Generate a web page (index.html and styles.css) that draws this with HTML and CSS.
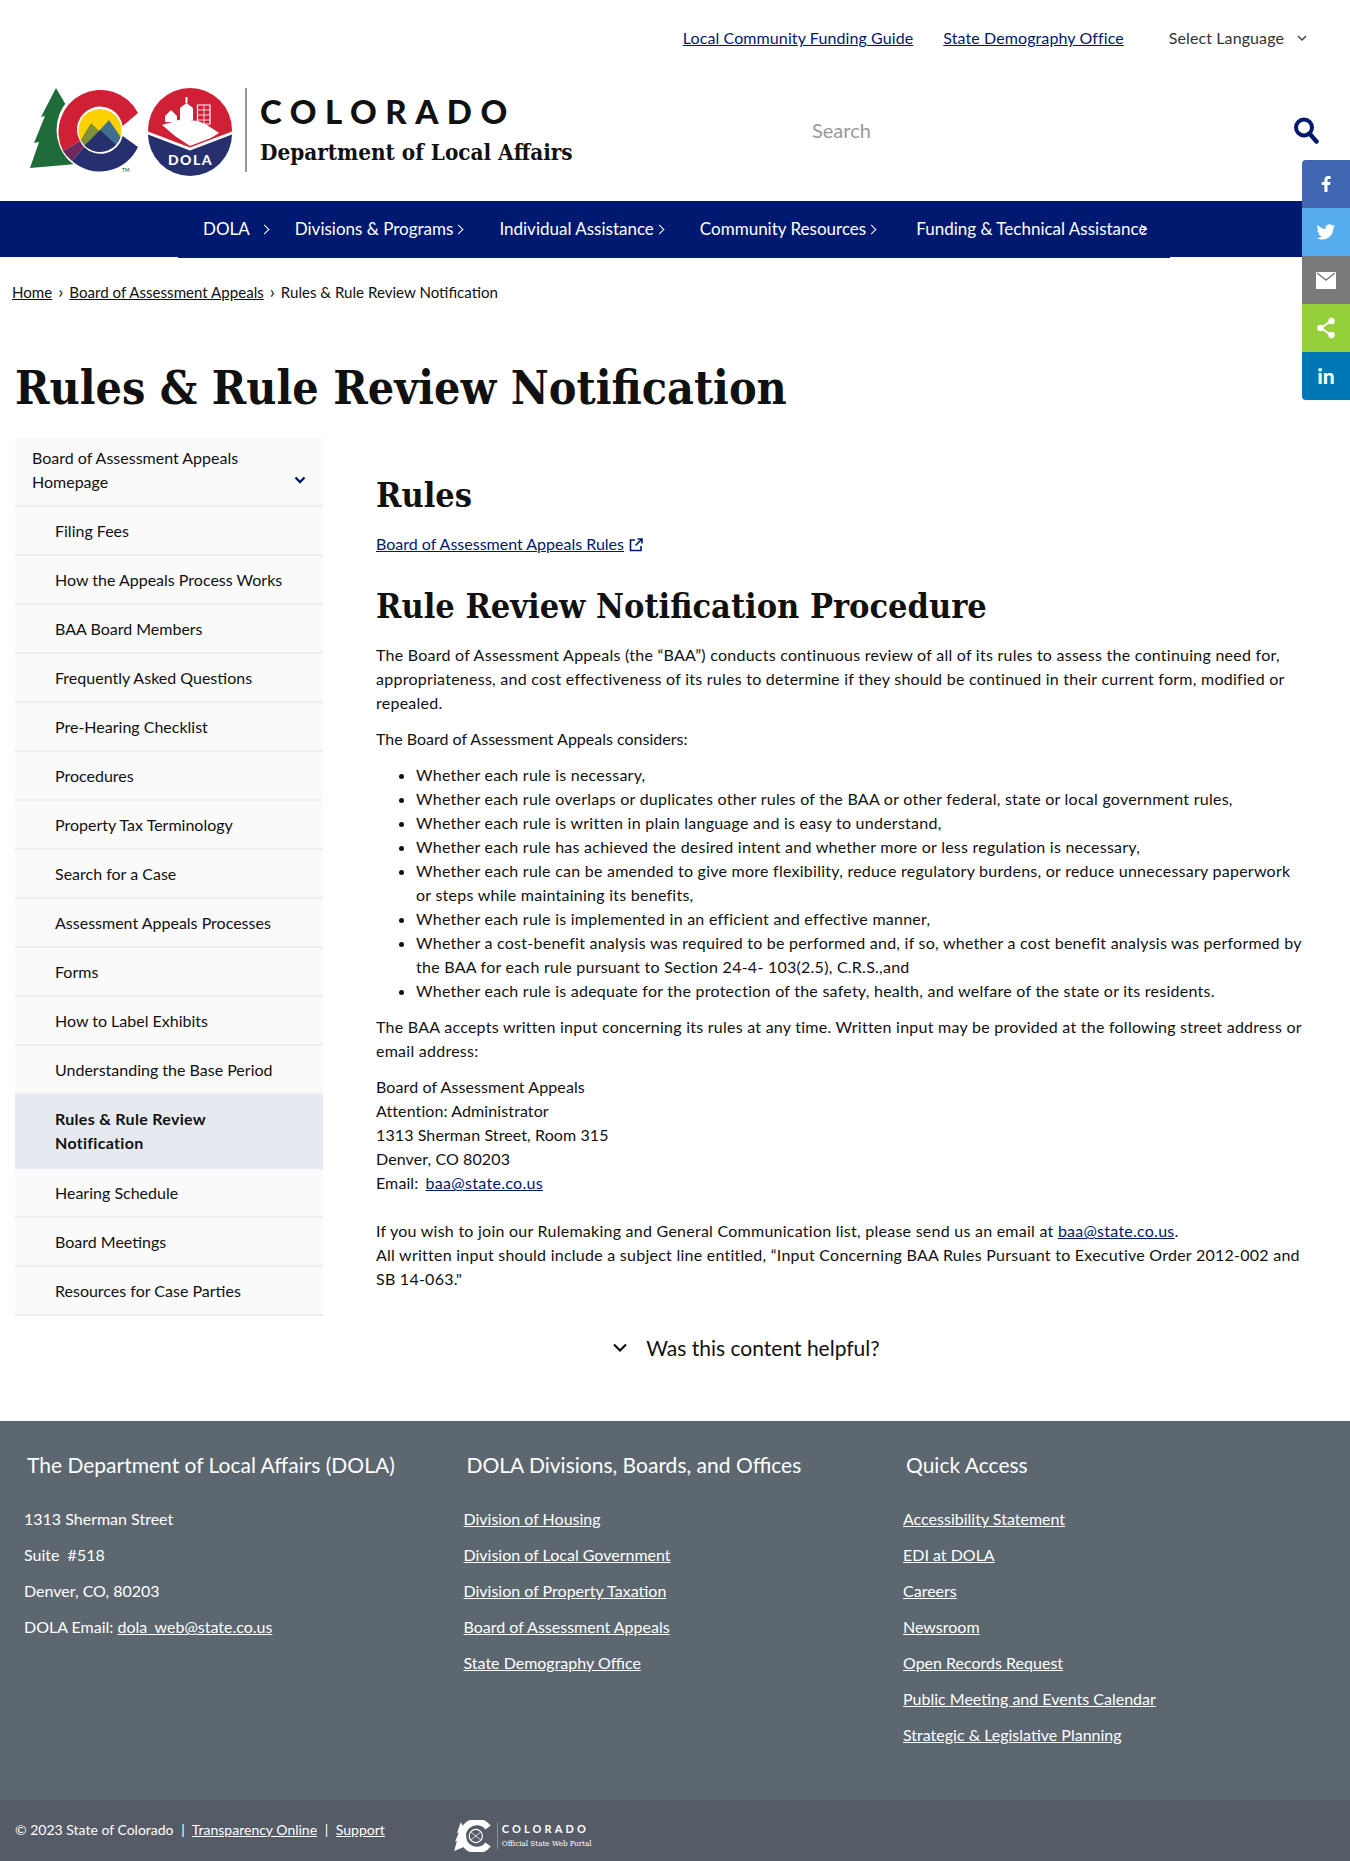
FILE: index.html
```html
<!DOCTYPE html>
<html lang="en">
<head>
  <meta charset="UTF-8">
  <meta name="viewport" content="width=device-width, initial-scale=1.0">
  <title>Rules &amp; Rule Review Notification</title>
  <link rel="stylesheet" href="styles.css">
</head>
<body>
  <div class="top-links">
    <a href="#">Local Community Funding Guide</a>
    <a href="#">State Demography Office</a>
    <span class="lang">Select Language
      <svg width="10" height="7" viewBox="0 0 10 7"><path d="M1 1l4 4 4-4" fill="none" stroke="#444" stroke-width="1.5"/></svg>
    </span>
  </div>

  <header class="masthead">
    <svg class="logo" width="230" height="92" viewBox="22 84 230 92">
      <defs>
        <clipPath id="peak"><circle cx="100" cy="130.500" r="21.500"/></clipPath>
      </defs>
      <!-- tree -->
      <path d="M56 88L70 112 76 164 30 168 39 142 34 143 45 116 41 117z" fill="#1f6b3a"/>
      <circle cx="100" cy="130" r="43.500" fill="#fff"/>
      <!-- C -->
      <path d="M138 113A42 42 0 1 0 63 151L80 141A23 23 0 1 1 122.700 126z" fill="#cf2035"/>
      <path d="M63 151L80 141A23 23 0 0 0 84 147L72 161A42 42 0 0 1 63 151z" fill="#6e2a5f"/>
      <path d="M138 147A42 42 0 0 1 72 161L84 147A23 23 0 0 0 122.700 136z" fill="#26306e"/>
      <g clip-path="url(#peak)">
        <path d="M78 108h44v45H78z" fill="#ffd100"/>
        <path d="M76 148L91 123 99 131 107 140 96 156z" fill="#7f8f3a"/>
        <path d="M99 131L109 120 124 142 112 147z" fill="#40708f"/>
        <path d="M78 152L100 130 124 152 100 158z" fill="#26306e"/>
      </g>
      <text x="122" y="172" class="tm">TM</text>
      <!-- DOLA seal -->
      <circle cx="190" cy="130" r="42" fill="#cf2035"/>
      <path d="M148 134L190 150l42-16A42 42 0 0 1 148 134z" fill="#26306e"/>
      <path d="M148 131.500L190 147.500l42-16v3L190 150.500 148 134.500z" fill="#fff"/>
      <path d="M162 125L182 119 198 121 207 125 219 133 211 138 190 146 175 136z" fill="#fff"/>
      <path d="M165 116L171 110 177 116V122H165zM180 108L186.500 103 193 108V120H180zM185.500 103V97H187.500V103z" fill="#fff"/>
      <path d="M197.500 105H210V124H197.500z" fill="none" stroke="#fff" stroke-width="1.200"/>
      <path d="M197.500 110H210M197.500 115H210M197.500 120H210M204 105V124" stroke="#fff" stroke-width=".8"/>
      <text x="190.500" y="165" text-anchor="middle" class="seal-text">DOLA</text>
      <path d="M246 88v84" stroke="#333" stroke-width="1"/>
    </svg>
    <div class="brand">
      <div class="brand-state">COLORADO</div>
      <div class="brand-dept">Department of Local Affairs</div>
    </div>
    <div class="search">
      <span class="search-hint">Search</span>
      <svg width="28" height="28" viewBox="0 0 28 28"><circle cx="12" cy="11.500" r="8" fill="none" stroke="#001970" stroke-width="4"/><path d="M17.500 17.500l7 8" stroke="#001970" stroke-width="4.400" stroke-linecap="round"/></svg>
    </div>
  </header>

  <nav class="mainnav">
    <a class="first" href="#">DOLA<i></i></a>
    <a href="#">Divisions &amp; Programs<i></i></a>
    <a href="#">Individual Assistance<i></i></a>
    <a href="#">Community Resources<i></i></a>
    <a class="last" href="#">Funding &amp; Technical Assistance<i></i></a>
  </nav>

  <div class="share">
    <a class="fb" href="#"><svg width="20" height="20" viewBox="0 0 20 20"><path d="M11.500 18v-7h2.600l.4-3h-3V6.300c0-.9.300-1.400 1.500-1.400h1.600V2.200C14.300 2.100 13.400 2 12.300 2 10 2 8.400 3.400 8.400 6v2H5.800v3h2.600v7z" fill="#fff"/></svg></a>
    <a class="tw" href="#"><svg width="20" height="20" viewBox="0 0 24 24"><path d="M23 5c-.8.400-1.700.6-2.600.7.900-.6 1.700-1.400 2-2.500-.9.500-1.900.9-2.900 1.100A4.600 4.600 0 0 0 11.600 8.500C7.800 8.300 4.400 6.500 2.100 3.700c-1.200 2.100-.6 4.800 1.400 6.100-.7 0-1.400-.2-2.100-.6 0 2.200 1.600 4.200 3.700 4.600-.7.200-1.400.2-2.100.1.600 1.900 2.300 3.200 4.300 3.200A9.300 9.300 0 0 1 .5 19c2.100 1.300 4.500 2.100 7.100 2.100 8.600 0 13.500-7.300 13.200-13.800.9-.6 1.700-1.400 2.200-2.300z" fill="#fff"/></svg></a>
    <a class="em" href="#"><svg width="20" height="20" viewBox="0 0 20 20"><path d="M0 2h20v17H0z" fill="#fff"/><path d="M1 3l9 7 9-7" fill="none" stroke="#7a7a7a" stroke-width="1.500"/></svg></a>
    <a class="sh" href="#"><svg width="20" height="22" viewBox="0 0 20 22"><path d="M15 4L5 11l10 7" fill="none" stroke="#fff" stroke-width="2"/><circle cx="15.500" cy="4" r="3.200" fill="#fff"/><circle cx="4.500" cy="11" r="3.200" fill="#fff"/><circle cx="15.500" cy="18" r="3.200" fill="#fff"/></svg></a>
    <a class="in" href="#"><span>in</span></a>
  </div>

  <div class="crumbs">
    <a href="#">Home</a><span class="sep">›</span><a href="#">Board of Assessment Appeals</a><span class="sep">›</span>Rules &amp; Rule Review Notification
  </div>

  <h1>Rules &amp; Rule Review Notification</h1>

  <div class="page">
    <aside class="sidebar">
      <a class="side-top" href="#">Board of Assessment Appeals Homepage
        <svg width="12" height="8" viewBox="0 0 12 8"><path d="M1.500 1.500L6 6l4.500-4.500" fill="none" stroke="#001970" stroke-width="2.400"/></svg>
      </a>
      <a href="#">Filing Fees</a>
      <a href="#">How the Appeals Process Works</a>
      <a href="#">BAA Board Members</a>
      <a href="#">Frequently Asked Questions</a>
      <a href="#">Pre-Hearing Checklist</a>
      <a href="#">Procedures</a>
      <a href="#">Property Tax Terminology</a>
      <a href="#">Search for a Case</a>
      <a href="#">Assessment Appeals Processes</a>
      <a href="#">Forms</a>
      <a href="#">How to Label Exhibits</a>
      <a href="#">Understanding the Base Period</a>
      <a class="active" href="#">Rules &amp; Rule Review Notification</a>
      <a href="#">Hearing Schedule</a>
      <a href="#">Board Meetings</a>
      <a href="#">Resources for Case Parties</a>
    </aside>

    <main class="content">
      <h2 class="first-head">Rules</h2>
      <p class="rules-link"><a href="#">Board of Assessment Appeals Rules</a>
        <svg width="16" height="16" viewBox="0 0 16 16"><path d="M7 3H2.500v10.500H13V9M9.500 2H14v4.500M14 2L7.500 8.500" fill="none" stroke="#001970" stroke-width="1.600"/></svg>
      </p>
      <h2>Rule Review Notification Procedure</h2>
      <p class="wide">The Board of Assessment Appeals (the “BAA”) conducts continuous review of all of its rules to assess the continuing need for, appropriateness, and cost effectiveness of its rules to determine if they should be continued in their current form, modified or repealed.</p>
      <p>The Board of Assessment Appeals considers:</p>
      <ul class="wide">
        <li>Whether each rule is necessary,</li>
        <li>Whether each rule overlaps or duplicates other rules of the BAA or other federal, state or local government rules,</li>
        <li>Whether each rule is written in plain language and is easy to understand,</li>
        <li>Whether each rule has achieved the desired intent and whether more or less regulation is necessary,</li>
        <li>Whether each rule can be amended to give more flexibility, reduce regulatory burdens, or reduce unnecessary paperwork or steps while maintaining its benefits,</li>
        <li>Whether each rule is implemented in an efficient and effective manner,</li>
        <li>Whether a cost-benefit analysis was required to be performed and, if so, whether a cost benefit analysis was performed by the BAA for each rule pursuant to Section 24-4- 103(2.5), C.R.S.,and</li>
        <li>Whether each rule is adequate for the protection of the safety, health, and welfare of the state or its residents.</li>
      </ul>
      <p class="wide">The BAA accepts written input concerning its rules at any time. Written input may be provided at the following street address or email address:</p>
      <p class="address">Board of Assessment Appeals<br>Attention: Administrator<br>1313 Sherman Street, Room 315<br>Denver, CO 80203<br>Email: <a href="#">baa@state.co.us</a></p>
      <p class="wide">If you wish to join our Rulemaking and General Communication list, please send us an email at <a href="#">baa@state.co.us</a>.<br>All written input should include a subject line entitled, “Input Concerning BAA Rules Pursuant to Executive Order 2012-002 and SB 14-063."</p>
      <div class="helpful">
        <svg width="16" height="10" viewBox="0 0 16 10"><path d="M2 1.500l6 6 6-6" fill="none" stroke="#111" stroke-width="2.200"/></svg>
        <span>Was this content helpful?</span>
      </div>
    </main>
  </div>

  <footer class="footer">
    <div class="foot-cols">
      <div class="foot-col">
        <h3>The Department of Local Affairs (DOLA)</h3>
        <p>1313 Sherman Street</p>
        <p>Suite&nbsp; #518</p>
        <p>Denver, CO, 80203</p>
        <p>DOLA Email: <a href="#">dola_web@state.co.us</a></p>
      </div>
      <div class="foot-col">
        <h3>DOLA Divisions, Boards, and Offices</h3>
        <p><a href="#">Division of Housing</a></p>
        <p><a href="#">Division of Local Government</a></p>
        <p><a href="#">Division of Property Taxation</a></p>
        <p><a href="#">Board of Assessment Appeals</a></p>
        <p><a href="#">State Demography Office</a></p>
      </div>
      <div class="foot-col">
        <h3>Quick Access</h3>
        <p><a href="#">Accessibility Statement</a></p>
        <p><a href="#">EDI at DOLA</a></p>
        <p><a href="#">Careers</a></p>
        <p><a href="#">Newsroom</a></p>
        <p><a href="#">Open Records Request</a></p>
        <p><a href="#">Public Meeting and Events Calendar</a></p>
        <p><a href="#">Strategic &amp; Legislative Planning</a></p>
      </div>
    </div>
    <div class="foot-bottom">
      <div class="copy">© 2023 State of Colorado <span>|</span> <a href="#">Transparency Online</a> <span>|</span> <a href="#">Support</a></div>
      <div class="portal">
        <svg width="38" height="32" viewBox="0 0 40 34">
          <path d="M7 2L12 12 14 27 0 33 3 22 1 23 5 13 3 14z" fill="#fff"/>
          <path d="M36 8A15 15 0 1 0 36 26" fill="none" stroke="#fff" stroke-width="7"/>
          <circle cx="23" cy="17" r="7" fill="none" stroke="#fff" stroke-width="1.200"/>
          <path d="M18 13l10 8M28 13l-10 8" stroke="#fff" stroke-width=".8"/>
        </svg>
        <div class="portal-text">
          <div class="portal-state">COLORADO</div>
          <div class="portal-sub">Official State Web Portal</div>
        </div>
      </div>
    </div>
  </footer>
</body>
</html>
```

FILE: styles.css
```css
* {
  box-sizing: border-box;
}
body {
  margin: 0;
  font-family: Lato, sans-serif;
  font-size: 16px;
  line-height: 24px;
  color: #111;
  background-color: white;
}
a {
  color: #001970;
}
.top-links {
  display: flex;
  justify-content: flex-end;
  align-items: center;
  gap: 30px;
  height: 50px;
  padding: 26px 43px 0 0;
  letter-spacing: .1px;
}
.lang {
  margin-left: 15px;
  color: #333;
  display: flex;
  align-items: center;
  gap: 13px;
}
.masthead {
  display: flex;
  align-items: center;
  height: 151px;
  padding: 8px 0 0 22px;
}
.logo {
  flex: none;
}
.seal-text {
  font: 900 14px Lato, sans-serif;
  letter-spacing: 1.500px;
  fill: #fff;
}
.tm {
  font: 5px Lato, sans-serif;
  fill: #333;
}
.brand {
  margin-left: 8px;
  width: 552px;
}
.brand-state {
  font-weight: 900;
  font-size: 33px;
  line-height: 36px;
  letter-spacing: 8.500px;
}
.brand-dept {
  font-family: "DejaVu Serif Condensed", "DejaVu Serif", serif;
  font-weight: bold;
  font-size: 22.300px;
  line-height: 28px;
  margin-top: 9px;
}
.search {
  flex: 1;
  display: flex;
  justify-content: space-between;
  align-items: center;
  padding: 0 30px 0 0;
}
.search-hint {
  font-size: 20px;
  color: #999;
}
.mainnav {
  position: relative;
  display: flex;
  gap: 36px;
  height: 56px;
  align-items: center;
  padding-left: 203px;
  background-color: #001970;
}
.mainnav::after {
  content: "";
  position: absolute;
  left: 178px;
  width: 992px;
  bottom: -1px;
  height: 2px;
  background-color: #001970;
}
.mainnav a {
  color: white;
  text-decoration: none;
  font-size: 17px;
  white-space: nowrap;
}
.mainnav i {
  display: inline-block;
  width: 7px;
  height: 7px;
  margin: 0 1px 2px 2px;
  border-top: 1.500px solid white;
  border-right: 1.500px solid white;
  transform: rotate(45deg);
}
.mainnav .first {
  margin-right: -10px;
}
.mainnav .first i {
  margin-left: 11px;
}
.mainnav .last {
  margin-left: 4px;
}
.mainnav .last i {
  margin-left: -9px;
}
.share {
  position: absolute;
  top: 160px;
  right: 0;
  width: 48px;
  border-radius: 4px 0 0 4px;
  overflow: hidden;
}
.share a {
  display: flex;
  align-items: center;
  justify-content: center;
  height: 48px;
  color: white;
  text-decoration: none;
}
.share .fb { background-color: #4267b2; }
.share .tw { background-color: #55acee; }
.share .em { background-color: #7a7a7a; }
.share .sh { background-color: #95d03a; }
.share .in { background-color: #0077b5; font-weight: 900; font-size: 21px; }
.crumbs {
  padding: 22px 0 0 12px;
  font-size: 15.100px;
}
.crumbs a {
  color: #111;
}
.sep {
  margin: 0 6px;
  font-size: 18px;
}
h1 {
  margin: 54px 0 0 15px;
  font-family: "DejaVu Serif Condensed", "DejaVu Serif", serif;
  font-size: 46.200px;
  line-height: 60px;
  color: #111;
}
.page {
  display: flex;
  align-items: flex-start;
  padding: 19px 44px 0 15px;
  gap: 53px;
}
.sidebar {
  flex: none;
  width: 308px;
  background-color: #fafafa;
}
.sidebar a {
  display: block;
  padding: 12px 24px 11px 40px;
  color: #111;
  text-decoration: none;
  border-bottom: 2px solid #eee;
}
.sidebar .side-top {
  position: relative;
  padding: 9px 24px 11px 17px;
}
.side-top svg {
  position: absolute;
  right: 17px;
  top: 39px;
}
.sidebar .active {
  font-weight: bold;
  letter-spacing: .3px;
  background-color: #e6eaf0;
  padding: 12px 60px 14px 40px;
  border-bottom: 0;
}
.content {
  flex: 1;
  padding-top: 38px;
}
.content h2 {
  margin: 0 0 17px;
  font-family: "DejaVu Serif Condensed", "DejaVu Serif", serif;
  font-size: 34px;
  line-height: 40px;
}
.content p.rules-link {
  margin: 0 0 30px;
}
.rules-link svg {
  vertical-align: -3px;
}
.content p {
  margin: 0 0 12px;
}
.content ul {
  margin: 0 0 12px;
  padding-left: 40px;
}
.wide {
  letter-spacing: .25px;
}
.content p.address {
  margin-bottom: 24px;
  letter-spacing: .1px;
}
.address a {
  margin-left: 3px;
  letter-spacing: .3px;
}
.helpful {
  display: flex;
  align-items: center;
  justify-content: center;
  gap: 18px;
  margin-top: 45px;
  font-size: 21px;
  padding-right: 190px;
}
.footer {
  margin-top: 61px;
  background-color: #5c6770;
  color: white;
}
.footer a {
  color: white;
}
.foot-cols {
  display: flex;
  height: 379px;
  padding: 29px 0 0 24px;
}
.foot-col {
  width: 439.500px;
}
.foot-col h3 {
  margin: 0 0 27px 3px;
  font-weight: 400;
  font-size: 21px;
  line-height: 30px;
}
.foot-col p {
  margin: 0 0 12px;
}
.foot-bottom {
  display: flex;
  align-items: center;
  gap: 69px;
  height: 61px;
  padding-left: 15px;
  background-color: #555b67;
  font-size: 14px;
}
.copy {
  margin-top: -2px;
}
.copy span {
  margin: 0 4px;
}
.portal {
  display: flex;
  align-items: center;
  gap: 5px;
  margin-top: 10px;
}
.portal-text {
  padding-left: 4px;
  border-left: 1px solid #8a8f99;
}
.portal-state {
  font-weight: bold;
  font-size: 11px;
  line-height: 14px;
  letter-spacing: 3.100px;
}
.portal-sub {
  font-family: "DejaVu Serif Condensed", serif;
  font-size: 8px;
  line-height: 10px;
  margin-top: 3px;
}
```
